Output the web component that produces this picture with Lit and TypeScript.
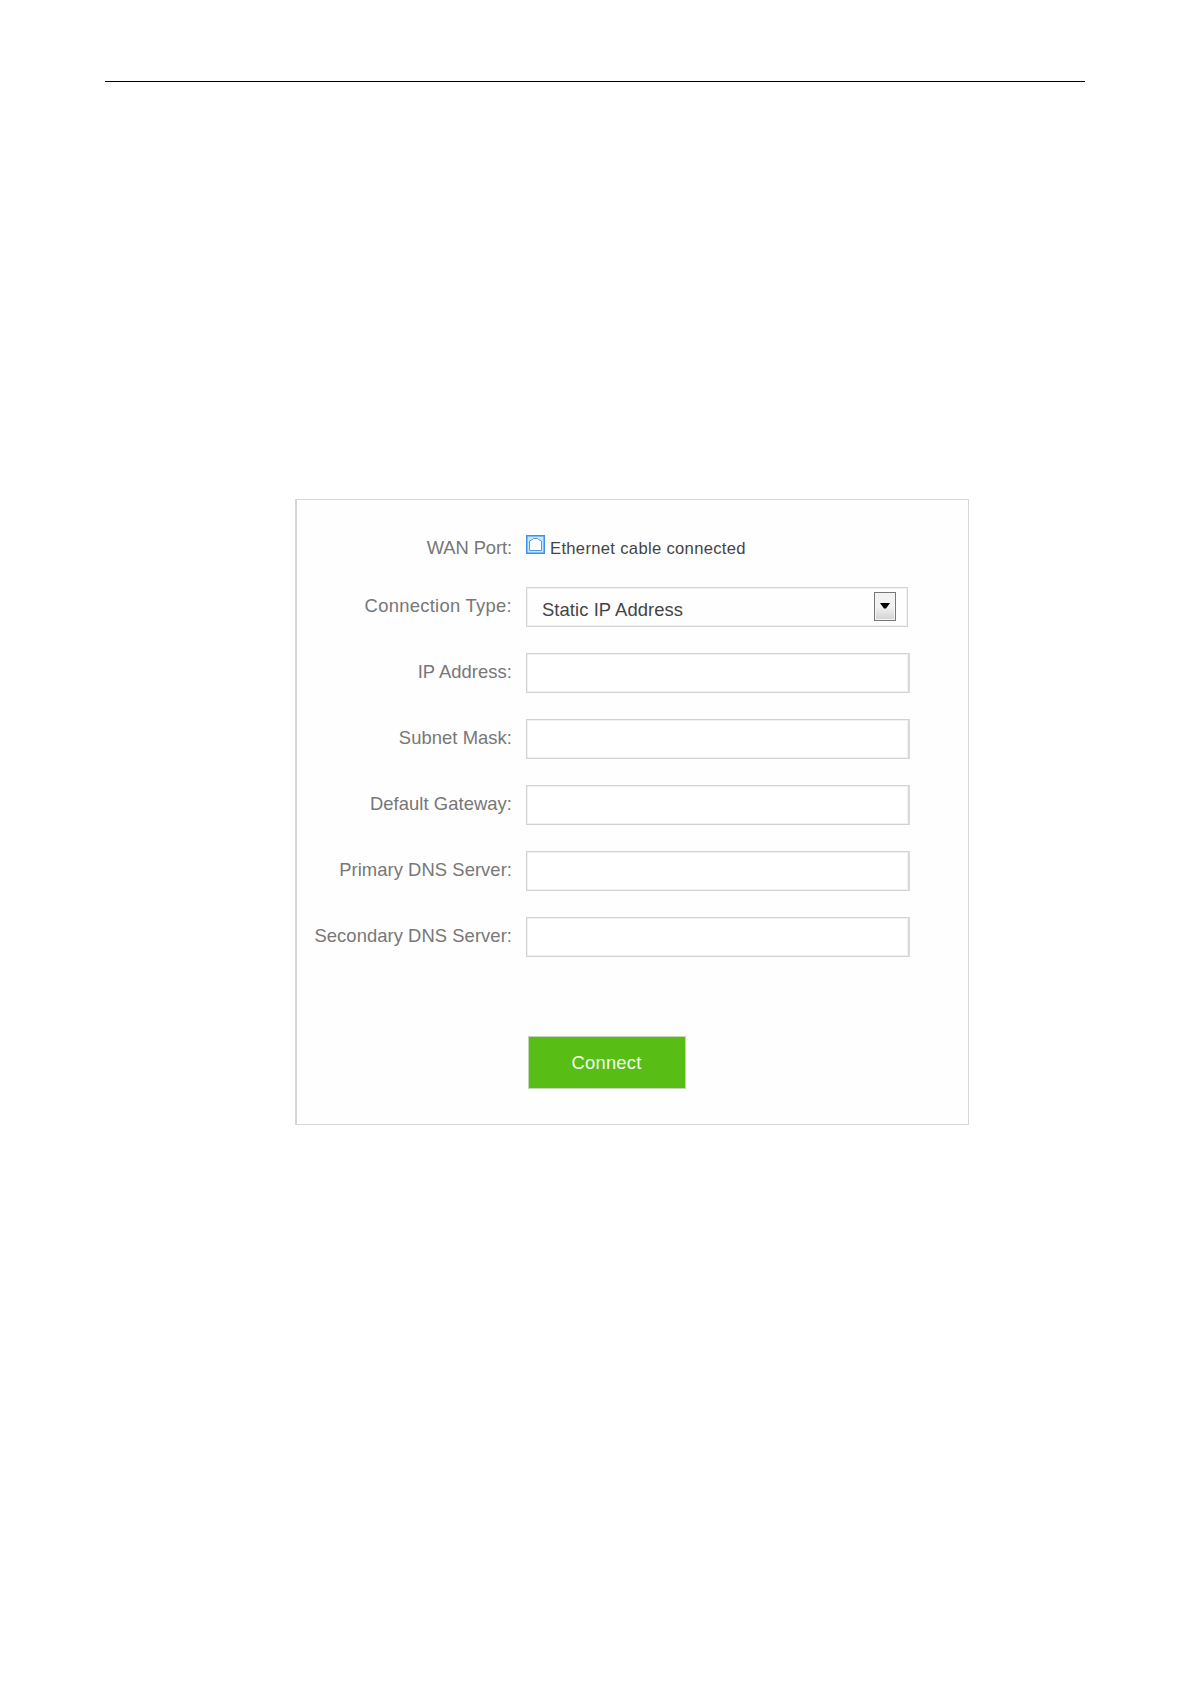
import { LitElement, html, css } from "lit";
import { customElement, property } from "lit/decorators.js";

@customElement("wan-row")
export class WanRow extends LitElement {
  @property() public label = "";

  static styles = css`
    :host {
      display: flex;
      height: 40px;
    }

    .label {
      flex: none;
      width: 215px;
      margin-right: 14px;
      line-height: 38px;
      letter-spacing: var(--label-spacing, 0.06px);
      text-align: right;
      white-space: nowrap;
      color: #777;
    }
  `;

  protected render() {
    return html`
      <div class="label">${this.label}</div>
      <slot></slot>
    `;
  }
}

@customElement("app-root")
export class AppRoot extends LitElement {
  static styles = css`
    :host {
      display: flow-root;
      min-height: 1684px;
      background: #fff;
      font-family: "Liberation Sans", Arial, sans-serif;
      font-size: 18.4px;
    }

    .rule {
      width: 980px;
      height: 1px;
      margin: 81px 0 0 105px;
      background: #000;
    }

    .panel {
      box-sizing: border-box;
      width: 674px;
      height: 626px;
      margin: 417px 0 0 295px;
      padding-top: 29px;
      border: 1px solid #d6d6d6;
      border-left-width: 2px;
      background: #fefefe;
    }

    .fields {
      display: flex;
      flex-direction: column;
      gap: 26px;
    }

    .fields .port {
      --label-spacing: -0.1px;
      margin-bottom: -8px;
    }

    .fields .type {
      --label-spacing: 0.29px;
    }

    .port-icon {
      width: 19px;
      height: 19px;
      margin-top: 6px;
    }

    .status {
      margin-left: 5px;
      font-size: 16.6px;
      letter-spacing: 0.32px;
      line-height: 40px;
      color: #444;
      white-space: nowrap;
    }

    .select {
      box-sizing: border-box;
      display: flex;
      justify-content: space-between;
      width: 382px;
      height: 40px;
      padding: 4px 11px 0 15px;
      border: 1px solid #d4d4d4;
      box-shadow: inset 0 0 0 1px #f1f1f1;
      line-height: 36px;
      letter-spacing: 0.08px;
      color: #444;
    }

    .arrow {
      box-sizing: border-box;
      display: flex;
      align-items: center;
      justify-content: center;
      width: 22px;
      height: 29px;
      padding-bottom: 1px;
      border: 1px solid #777;
      box-shadow: inset 0 0 0 1px #f4f4f4;
      background: linear-gradient(#f2f2f2 50%, #d2d2d2);
    }

    input {
      box-sizing: border-box;
      width: 384px;
      height: 40px;
      margin: 0;
      padding: 0 14px;
      border: 1px solid #d2d2d2;
      border-right: 2px solid #dadada;
      border-radius: 0;
      outline: 0;
      box-shadow: inset 0 0 0 1px #f1f1f1;
      background: #fff;
      font: inherit;
    }

    button {
      display: block;
      width: 158px;
      height: 53px;
      margin: 79px 0 0 231px;
      padding: 1px 1px 0 0;
      border: 1px solid #c3d4b9;
      background: #58be16;
      color: #f0fbe9;
      font: inherit;
      letter-spacing: 0.2px;
    }
  `;

  private _inputs = [
    "IP Address:",
    "Subnet Mask:",
    "Default Gateway:",
    "Primary DNS Server:",
    "Secondary DNS Server:",
  ];

  protected render() {
    return html`
      <div class="rule"></div>
      <div class="panel">
        <div class="fields">
          <wan-row class="port" label="WAN Port:">
            <svg class="port-icon" viewBox="0 0 19 19">
              <rect x="0.75" y="0.75" width="17.5" height="17.5" fill="#c4e8ff" stroke="#3f90ee" stroke-width="1.5" />
              <path d="M3.5 15.5V6L6.5 4.5L7.5 3.5H11.5L12.5 4.5L15.5 6V15.5Z" fill="#fff" stroke="#4b9bee" />
            </svg>
            <span class="status">Ethernet cable connected</span>
          </wan-row>
          <wan-row class="type" label="Connection Type:">
            <div class="select">
              <span>Static IP Address</span>
              <span class="arrow">
                <svg width="10" height="6" viewBox="0 0 10 6">
                  <path d="M0 0H10L6 5.5H4Z" fill="#000" />
                </svg>
              </span>
            </div>
          </wan-row>
          ${this._inputs.map(
            (label) => html`
              <wan-row label=${label}>
                <input type="text" aria-label=${label} />
              </wan-row>
            `
          )}
        </div>
        <button type="button">Connect</button>
      </div>
    `;
  }
}

declare global {
  interface HTMLElementTagNameMap {
    "wan-row": WanRow;
    "app-root": AppRoot;
  }
}
